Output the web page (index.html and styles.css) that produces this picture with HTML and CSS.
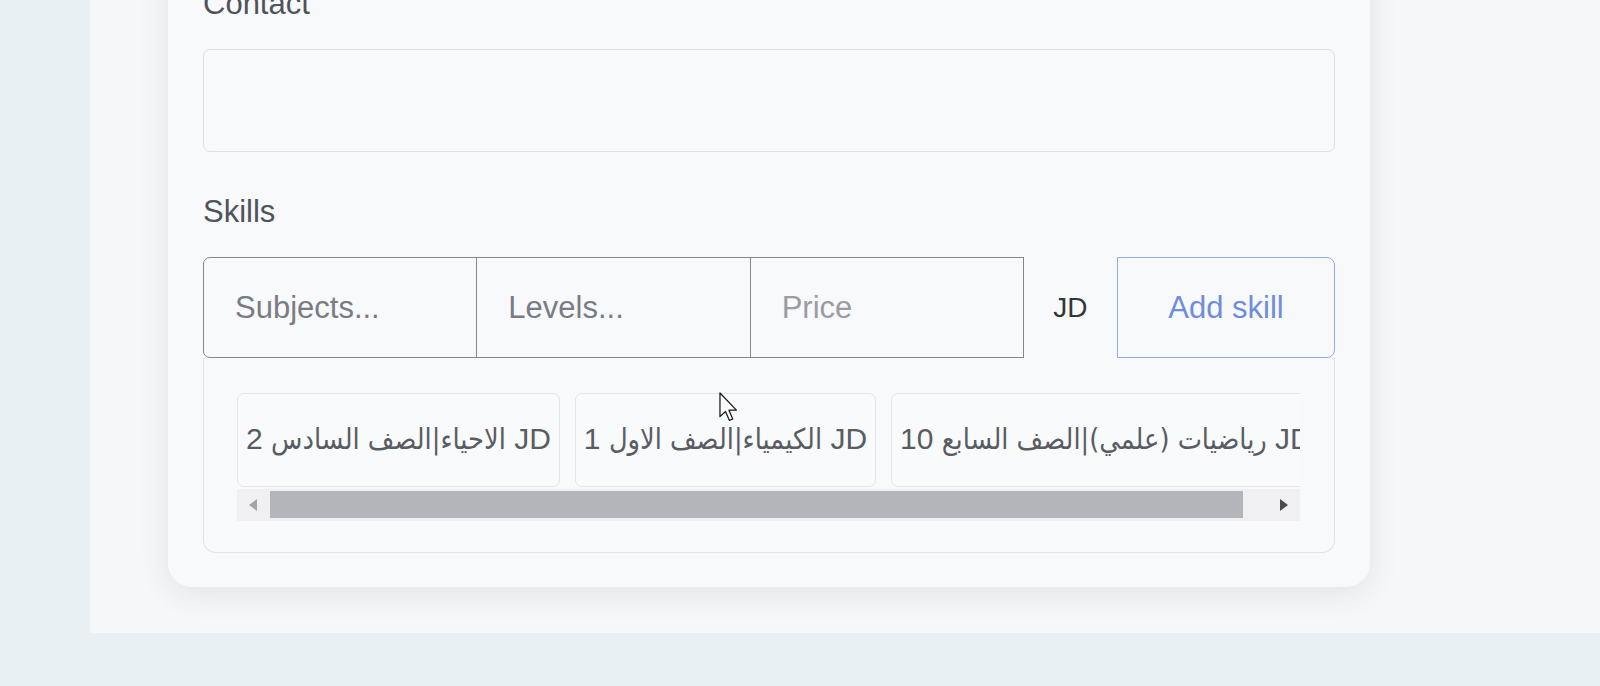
FILE: index.html
```html
<!DOCTYPE html>
<html lang="en">
<head>
<meta charset="utf-8">
<title>Profile – Skills</title>
<link rel="stylesheet" href="styles.css">
</head>
<body>
<div class="layout">
  <aside class="rail"></aside>
  <main class="panel">
    <section class="card">
      <div class="field field-contact">
        <label class="label" for="contact">Contact</label>
        <textarea id="contact" class="textarea"></textarea>
      </div>
      <div class="field">
        <label class="label" for="subjects">Skills</label>
        <div class="input-group">
          <input id="subjects" class="ig-input ig-first" type="text" placeholder="Subjects...">
          <input class="ig-input" type="text" placeholder="Levels...">
          <input class="ig-input ig-price" type="text" placeholder="Price">
          <span class="ig-addon">JD</span>
          <button class="ig-btn" type="button">Add skill</button>
        </div>
        <div class="skills-box">
          <div class="skills-scroll">
            <div class="chip"><span class="ar">الاحياء|الصف السادس</span> 2 JD</div>
            <div class="chip"><span class="ar">الكيمياء|الصف الاول</span> 1 JD</div>
            <div class="chip"><span class="ar">رياضيات (علمي)|الصف السابع</span> 10 JD</div>
          </div>
          <div class="scrollbar" aria-hidden="true">
            <span class="sb-btn"><span class="tri tri-left"></span></span>
            <span class="sb-track"><span class="sb-thumb" style="width: 97.5%"></span></span>
            <span class="sb-btn"><span class="tri tri-right"></span></span>
          </div>
        </div>
      </div>
    </section>
  </main>
</div>
<svg class="cursor" width="19" height="30" viewBox="0 0 12 19" aria-hidden="true">
  <path d="M0.6 0.6 L0.6 15.6 L4.1 12.3 L6.6 18 L8.7 17.1 L6.3 11.5 L11 11.5 Z" fill="#ffffff" stroke="#1a1a1a" stroke-width="0.8" stroke-linejoin="round"/>
</svg>
</body>
</html>
```
FILE: styles.css
```css
* { box-sizing: border-box; }

html, body {
  margin: 0;
  padding: 0;
}

body {
  width: 1600px;
  height: 686px;
  overflow: hidden;
  background: #e9f0f3;
  font-family: "Liberation Sans", "DejaVu Sans", Arial, sans-serif;
  position: relative;
}

.layout {
  display: flex;
  align-items: flex-start;
  height: 686px;
}

.rail {
  width: 90px;
  flex: none;
  align-self: stretch;
  background: #e9f0f3;
}

.panel {
  flex: 1;
  height: 633px;
  background: #f5f7f8;
  padding-left: 78px;
  overflow: hidden;
}

.card {
  width: 1202px;
  margin-top: -54px;
  padding: 35px 35px 34px;
  background: #f8f9fa;
  border-radius: 24px;
  box-shadow: 0 6px 30px rgba(60, 64, 110, 0.11);
}

.field-contact {
  margin-bottom: 37px;
}

.label {
  display: block;
  font-size: 31px;
  line-height: 46px;
  margin-bottom: 22px;
  color: #50535b;
}

.textarea {
  display: block;
  width: 100%;
  height: 103px;
  resize: none;
  border: 1px solid #dcdeeb;
  border-radius: 7px;
  background: #f8f9fa;
  font: inherit;
  font-size: 31px;
  outline: none;
}

.input-group {
  display: flex;
  height: 101px;
}

.ig-input {
  flex: 1 1 0;
  min-width: 0;
  height: 101px;
  margin: 0 0 0 -1px;
  padding: 0 31px;
  border: 1px solid #85868f;
  border-radius: 0;
  background: transparent;
  font-family: inherit;
  font-size: 31px;
  color: #3c3f46;
  outline: none;
}

.ig-first {
  margin-left: 0;
  border-radius: 7px 0 0 7px;
}

.ig-input::placeholder {
  color: #7a7c85;
}

.ig-price::placeholder {
  color: #9b9ca3;
}

.ig-addon {
  flex: none;
  width: 93px;
  display: flex;
  align-items: center;
  justify-content: center;
  font-size: 28px;
  color: #33353b;
}

.ig-btn {
  flex: none;
  width: 218px;
  height: 101px;
  margin: 0;
  padding: 0;
  border: 1px solid #93abe3;
  border-radius: 0 8px 8px 0;
  background: transparent;
  font-family: inherit;
  font-size: 31px;
  color: #6f8ddc;
}

.skills-box {
  border: 1px solid #e1e2ea;
  border-top: 0;
  border-radius: 0 0 13px 13px;
  padding: 35px 34px 31px 33px;
}

.skills-scroll {
  display: flex;
  gap: 15px;
  overflow: hidden;
}

.chip {
  flex: none;
  white-space: nowrap;
  padding: 22px 8px 24px;
  line-height: 45px;
  font-size: 30px;
  color: #5a5c63;
  border: 1px solid #e4e5eb;
  border-radius: 7px;
  background: #f9fafb;
}

.ar {
  font-family: "DejaVu Sans Condensed", "DejaVu Sans", sans-serif;
  font-size: 28.6px;
}

.scrollbar {
  display: flex;
  height: 32px;
  margin-top: 2px;
  background: #f0f0f2;
}

.sb-btn {
  flex: none;
  width: 32px;
  display: flex;
  align-items: center;
  justify-content: center;
}

.tri {
  width: 0;
  height: 0;
  border-top: 6px solid transparent;
  border-bottom: 6px solid transparent;
}

.tri-left {
  border-right: 8px solid #a3a3a8;
}

.tri-right {
  border-left: 8px solid #4a4a4f;
}

.sb-track {
  flex: 1;
  display: flex;
  padding: 2px 0 3px 1px;
}

.sb-thumb {
  display: block;
  background: #b4b4bb;
}

.cursor {
  position: absolute;
  left: 719px;
  top: 392px;
}
```
